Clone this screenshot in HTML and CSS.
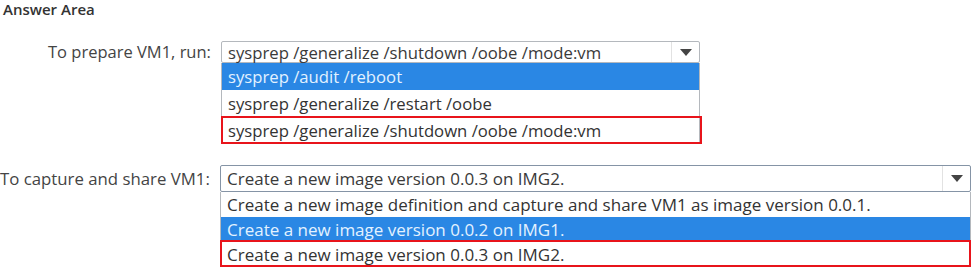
FILE: index.html
```html
<!DOCTYPE html>
<html>
<head>
<meta charset="utf-8">
<link rel="stylesheet" href="styles.css">
</head>
<body>
<div class="title">Answer Area</div>

<div class="q q1">
  <div class="label">To prepare VM1, run:</div>
  <div class="dd">
    <div class="select">
      <span class="val">sysprep /generalize /shutdown /oobe /mode:vm</span>
      <span class="btn"><svg width="12" height="7" viewBox="0 0 12 7"><path d="M0 0H12L6 7Z" fill="#444"/></svg></span>
    </div>
    <div class="list">
      <div class="opt sel">sysprep /audit /reboot</div>
      <div class="opt">sysprep /generalize /restart /oobe</div>
      <div class="opt ans">sysprep /generalize /shutdown /oobe /mode:vm</div>
    </div>
  </div>
</div>

<div class="q q2">
  <div class="label">To capture and share VM1:</div>
  <div class="dd">
    <div class="select">
      <span class="val">Create a new image version 0.0.3 on IMG2.</span>
      <span class="btn"><svg width="12" height="7" viewBox="0 0 12 7"><path d="M0 0H12L6 7Z" fill="#444"/></svg></span>
    </div>
    <div class="list">
      <div class="opt">Create a new image definition and capture and share VM1 as image version 0.0.1.</div>
      <div class="opt sel">Create a new image version 0.0.2 on IMG1.</div>
      <div class="opt ans">Create a new image version 0.0.3 on IMG2.</div>
    </div>
  </div>
</div>
</body>
</html>
```

FILE: styles.css
```css
html, body {
  margin: 0;
  padding: 0;
  background: #ffffff;
}
body {
  width: 973px;
  height: 269px;
  overflow: hidden;
  font-family: "Open Sans", "Noto Sans", sans-serif;
  color: #333;
}
.title {
  font-size: 15px;
  font-weight: 600;
  color: #333;
  padding: 0 0 0 3px;
  height: 18px;
  line-height: 18px;
}
.q {
  display: flex;
  align-items: flex-start;
}
.q1 {
  margin-top: 23px;
  padding-left: 48px;
}
.q2 {
  margin-top: 21px;
  padding-left: 0;
}
.label {
  color: #444;
  white-space: nowrap;
}
.q1 .label { font-size: 16.5px; line-height: 22px; width: 173px; }
.q2 .label { font-size: 16.8px; line-height: 27px; width: 220px; }
.dd {
  display: flex;
  flex-direction: column;
}
.q1 .dd { width: 479px; }
.q2 .dd { width: 751px; }
.select {
  display: flex;
  align-items: stretch;
  border: 1px solid #b4b8bd;
  border-radius: 2px;
  box-sizing: border-box;
  background: #fff;
}
.q1 .select { height: 22px; }
.q2 .select { height: 27px; border-color: #8594a6; }
.val {
  flex: 1;
  padding-left: 6px;
  color: #3a3a3a;
  white-space: nowrap;
  display: flex;
  align-items: center;
}
.q1 .val, .q1 .opt { font-size: 16.7px; }
.q2 .val, .q2 .opt { font-size: 17px; }
.btn {
  width: 27px;
  border-left: 1px solid #e2e2e2;
  display: flex;
  align-items: center;
  justify-content: center;
}
.list {
  border-left: 1px solid #b4b8bd;
  border-right: 1px solid #b4b8bd;
  display: flex;
  flex-direction: column;
}
.opt {
  position: relative;
  padding-left: 6px;
  color: #333;
  white-space: nowrap;
  display: flex;
  align-items: center;
}
.q1 .opt { height: 27px; }
.q2 .opt { height: 25px; }
.q2 .opt.sel { height: 24px; }
.q2 .opt.ans { height: 26px; }
.opt.sel {
  background: #2a87e4;
  color: #e3f2ff;
}
.opt.ans::after {
  content: "";
  position: absolute;
  left: -1px;
  right: -3px;
  top: -1px;
  bottom: 0;
  border: 2px solid #e8141b;
}
.q2 .opt.ans::after { right: -1px; }
```
